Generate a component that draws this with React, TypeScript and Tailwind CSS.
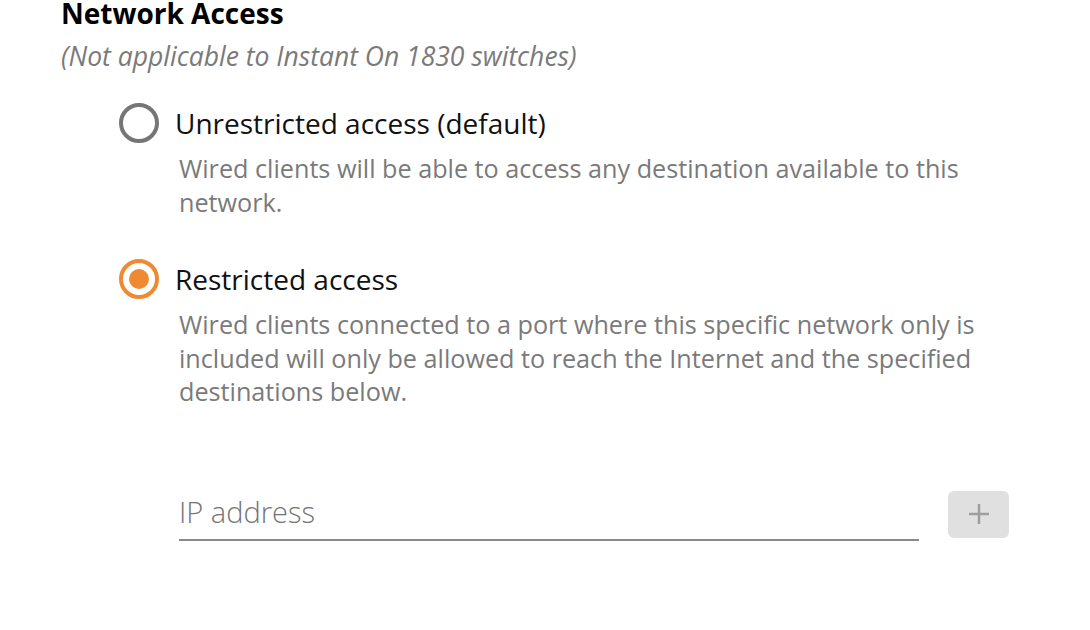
import React from "react";

function Radio({ checked }: { checked: boolean }) {
  if (checked) {
    return (
      <span className="flex h-[40px] w-[40px] shrink-0 items-center justify-center rounded-full border-[4px] border-[#ef8a33]">
        <span className="h-[20px] w-[20px] rounded-full bg-[#ef8a33]" />
      </span>
    );
  }
  return <span className="h-[40px] w-[40px] shrink-0 rounded-full border-[4px] border-[#767676]" />;
}

function Option({ checked, label, desc, className }: { checked: boolean; label: string; desc: string; className?: string }) {
  return (
    <div className={className}>
      <div className="flex h-[40px] items-center gap-[16px]">
        <Radio checked={checked} />
        <span className="text-[28px] leading-[40px] text-[#111]">{label}</span>
      </div>
      <p className="mt-[9px] ml-[60px] text-[25.2px] leading-[33.5px] text-[#7a7a7a]">{desc}</p>
    </div>
  );
}

export default function App() {
  return (
    <div className="h-[630px] w-[1090px] overflow-hidden bg-white" style={{ fontFamily: '"Open Sans", sans-serif' }}>
      <div className="pl-[61px]">
        <h2 className="text-[28px] font-bold leading-[26px] text-black">Network Access</h2>
        <p className="mt-[13px] text-[26.5px] italic leading-[34px] text-[#7a7a7a]">(Not applicable to Instant On 1830 switches)</p>
      </div>
      <div className="w-[1010px] pl-[119px]">
        <Option
          className="mt-[30px]"
          checked={false}
          label="Unrestricted access (default)"
          desc="Wired clients will be able to access any destination available to this network."
        />
        <Option
          className="mt-[40px]"
          checked={true}
          label="Restricted access"
          desc="Wired clients connected to a port where this specific network only is included will only be allowed to reach the Internet and the specified destinations below."
        />
        <div className="mt-[82px] ml-[60px] flex items-start gap-[29px]">
          <div className="flex h-[50px] w-[740px] items-center border-b-2 border-[#8a8a8a] pb-[6px]">
            <input
              className="w-full bg-transparent text-[29px] font-light text-[#333] outline-none placeholder:text-[#757575]"
              placeholder="IP address"
            />
          </div>
          <button className="flex h-[47px] w-[61px] items-center justify-center rounded-[6px] bg-[#e0e0e0]">
            <svg width="22" height="22" viewBox="0 0 22 22">
              <path d="M11 1v20M1 11h20" stroke="#9e9e9e" strokeWidth="2.5" />
            </svg>
          </button>
        </div>
      </div>
    </div>
  );
}
